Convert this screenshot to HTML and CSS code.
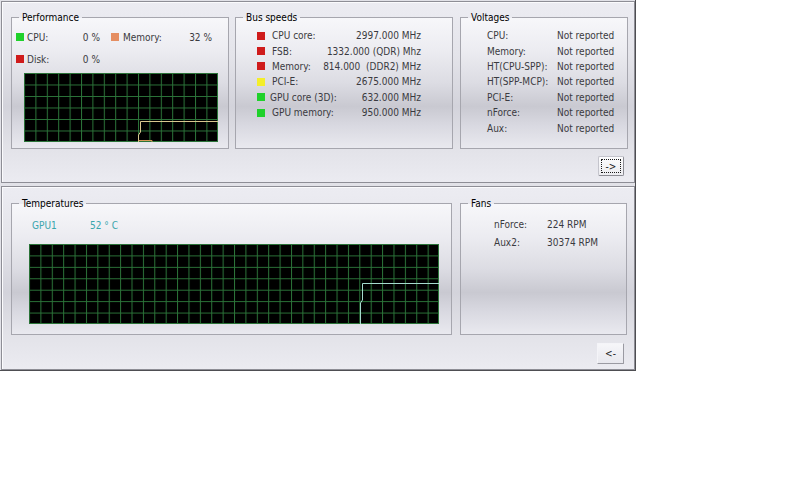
FILE: index.html
```html
<!DOCTYPE html>
<html>
<head>
<meta charset="utf-8">
<title>System Monitor</title>
<link rel="stylesheet" href="styles.css">
</head>
<body>
<div class="window">
  <section class="panel panel-top">
    <div class="groups groups-top">
      <fieldset class="group perf">
        <legend>Performance</legend>
        <div class="perf-row r1">
          <span class="item item-a"><i class="sq green"></i><span class="lbl">CPU:</span><span class="val">0 %</span></span>
          <span class="item item-b"><i class="sq orange"></i><span class="lbl">Memory:</span><span class="val">32 %</span></span>
        </div>
        <div class="perf-row r2">
          <span class="item item-a"><i class="sq red"></i><span class="lbl">Disk:</span><span class="val">0 %</span></span>
        </div>
        <svg class="graph graph-perf" width="194" height="69" viewBox="0 0 194 69">
          <defs>
            <pattern id="gridA" width="11.4" height="11.5" patternUnits="userSpaceOnUse">
              <path d="M0.5 0V11.5M0 0.5H11.4" stroke="#2b7439" stroke-width="1" fill="none"/>
            </pattern>
          </defs>
          <rect width="194" height="69" fill="#000"/>
          <rect width="194" height="69" fill="url(#gridA)"/>
          <path d="M193.5 0V69M0 68.5H194" stroke="#2b7439" fill="none"/>
          <path d="M194 48.5H116.5V59L114.5 62V69" stroke="#d8c68e" fill="none"/>
          <path d="M114.5 67.5H128V69" stroke="#d49a56" fill="none"/>
        </svg>
      </fieldset>
      <fieldset class="group bus">
        <legend>Bus speeds</legend>
        <div class="rows">
          <div class="bus-row"><i class="sq red"></i><span class="lbl">CPU core:</span><span class="val">2997.000 MHz</span></div>
          <div class="bus-row"><i class="sq red"></i><span class="lbl">FSB:</span><span class="val">1332.000 (QDR) Mhz</span></div>
          <div class="bus-row"><i class="sq red"></i><span class="lbl">Memory:</span><span class="val">814.000&nbsp; (DDR2) MHz</span></div>
          <div class="bus-row"><i class="sq yellow"></i><span class="lbl">PCI-E:</span><span class="val">2675.000 MHz</span></div>
          <div class="bus-row"><i class="sq green"></i><span class="lbl lbl-tight">GPU core (3D):</span><span class="val">632.000 MHz</span></div>
          <div class="bus-row"><i class="sq green"></i><span class="lbl">GPU memory:</span><span class="val">950.000 MHz</span></div>
        </div>
      </fieldset>
      <fieldset class="group volt">
        <legend>Voltages</legend>
        <div class="rows">
          <div class="volt-row"><span class="lbl">CPU:</span><span class="val">Not reported</span></div>
          <div class="volt-row"><span class="lbl">Memory:</span><span class="val">Not reported</span></div>
          <div class="volt-row"><span class="lbl">HT(CPU-SPP):</span><span class="val">Not reported</span></div>
          <div class="volt-row"><span class="lbl">HT(SPP-MCP):</span><span class="val">Not reported</span></div>
          <div class="volt-row"><span class="lbl">PCI-E:</span><span class="val">Not reported</span></div>
          <div class="volt-row"><span class="lbl">nForce:</span><span class="val">Not reported</span></div>
          <div class="volt-row"><span class="lbl">Aux:</span><span class="val">Not reported</span></div>
        </div>
      </fieldset>
    </div>
    <div class="btn-row btn-row-top"><button class="btn btn-focus">-&gt;</button></div>
  </section>
  <section class="panel panel-bottom">
    <div class="groups groups-bottom">
      <fieldset class="group temp">
        <legend>Temperatures</legend>
        <div class="temp-row"><span class="t-lbl">GPU1</span><span class="t-val">52 ° C</span></div>
        <svg class="graph graph-temp" width="410" height="80" viewBox="0 0 410 80">
          <defs>
            <pattern id="gridB" width="11.39" height="11.43" patternUnits="userSpaceOnUse">
              <path d="M0.5 0V11.43M0 0.5H11.39" stroke="#2b7439" stroke-width="1" fill="none"/>
            </pattern>
          </defs>
          <rect width="410" height="80" fill="#000"/>
          <rect width="410" height="80" fill="url(#gridB)"/>
          <path d="M409.5 0V80M0 79.5H410" stroke="#2b7439" fill="none"/>
          <path d="M331.5 80V59L333.5 56V39.5H410" stroke="#a4dacd" fill="none"/>
        </svg>
      </fieldset>
      <fieldset class="group fans">
        <legend>Fans</legend>
        <div class="rows fan-rows">
          <div class="fan-row"><span class="lbl">nForce:</span><span class="val">224 RPM</span></div>
          <div class="fan-row"><span class="lbl">Aux2:</span><span class="val">30374 RPM</span></div>
        </div>
      </fieldset>
    </div>
    <div class="btn-row btn-row-bottom"><button class="btn btn-plain">&lt;-</button></div>
  </section>
</div>
</body>
</html>
```
FILE: styles.css
```css
html, body {
  margin: 0;
  padding: 0;
  background: #ffffff;
}

body {
  font-family: "DejaVu Sans Condensed", "Liberation Sans", sans-serif;
  font-size: 10px;
  color: #3a3a40;
}

.window {
  width: 636px;
  height: 371px;
  box-sizing: border-box;
  padding: 1px 0 0 1px;
  border-right: 1px solid #4e4e52;
  border-bottom: 1px solid #4e4e52;
  background: #e2e2e8;
  display: flex;
  flex-direction: column;
  gap: 3px;
}

.panel {
  width: 634px;
  box-sizing: border-box;
  border: 1px solid #8e8e96;
  box-shadow: inset 1px 1px 0 #fbfbfd;
  background: linear-gradient(to bottom, #ececf2 0%, #e4e4ea 30%, #d3d3db 58%, #e2e2e8 80%, #ebebf1 100%);
  display: flex;
  flex-direction: column;
}

.panel-top {
  height: 182px;
}

.panel-bottom {
  height: 184px;
}

.groups {
  display: flex;
  padding-left: 9px;
}

.groups-top {
  padding-top: 9px;
  gap: 6px;
}

.groups-top .bus + .volt {
  margin-left: 1px;
}

.groups-bottom {
  padding-top: 10px;
  gap: 8px;
}

.group {
  margin: 0;
  padding: 0;
  min-inline-size: 0;
  box-sizing: border-box;
  height: 138px;
  border: 1px solid #a6a6ae;
  background: linear-gradient(to bottom, #f7f7fa 0%, #ececf1 25%, #dcdce3 50%, #c9c9d1 68%, #d8d8e0 82%, #e9e9ef 100%);
}

.group legend {
  margin-left: 7px;
  padding: 0 3px;
  line-height: 13px;
  color: #000;
}

.perf { width: 218px; }
.bus { width: 218px; }
.volt { width: 168px; }
.temp { width: 441px; }
.fans { width: 167px; }

.sq {
  display: inline-block;
  width: 8px;
  height: 8px;
  flex: none;
}
.green { background: #1fd12b; }
.orange { background: #e58e62; }
.red { background: #cf1b1b; }
.yellow { background: #f4ee2a; }

/* Performance */
.perf-row {
  display: flex;
  align-items: center;
  height: 14px;
  padding-left: 4px;
}
.perf-row.r1 { margin-top: 6px; }
.perf-row.r2 { margin-top: 8px; }

.item {
  display: flex;
  align-items: center;
}
.item .sq { margin-right: 3px; }
.item .lbl { flex: 1; }
.item .val { text-align: right; }
.item-a { width: 84px; }
.item-b { width: 101px; margin-left: 11px; }
.item-b .sq { margin-right: 4px; }

.graph {
  display: block;
}
.graph-perf {
  margin: 7px 0 0 12px;
}

/* Bus speeds */
.rows {
  padding-top: 4px;
}
.bus-row {
  display: flex;
  align-items: center;
  height: 15.4px;
  padding-left: 21px;
  padding-right: 31px;
}
.bus-row .sq { margin-right: 7px; }
.bus-row .lbl-tight { margin-left: -2px; }
.bus-row .val {
  margin-left: auto;
  white-space: pre;
}

/* Voltages */
.volt-row {
  display: flex;
  align-items: center;
  height: 15.4px;
  padding-left: 26px;
}
.volt-row .lbl { width: 70px; }

/* Buttons */
.btn-row {
  display: flex;
  justify-content: flex-end;
  padding-right: 10px;
}
.btn-row-top { margin-top: 7px; }
.btn-row-bottom { margin-top: 8px; }

.btn {
  box-sizing: border-box;
  padding: 0;
  margin: 0;
  font-family: inherit;
  font-size: 10px;
  color: #222;
  display: flex;
  align-items: center;
  justify-content: center;
}
.btn-focus {
  width: 26px;
  height: 20px;
  border: 1px solid;
  border-color: #c4c4cc #8a8a92 #8a8a92 #c4c4cc;
  border-radius: 2px;
  background: linear-gradient(to bottom, #fdfdfe, #ececf0);
  outline: 1px dotted #1a1a1a;
  outline-offset: -4px;
}
.btn-plain {
  width: 27px;
  height: 21px;
  border: 1px solid;
  border-color: #f4f4f8 #9a9aa2 #9a9aa2 #f4f4f8;
  border-radius: 1px;
  background: linear-gradient(to bottom, #f6f6f9, #e8e8ee);
}

/* Temperatures */
.temp-row {
  display: flex;
  align-items: center;
  height: 14px;
  margin-top: 8px;
  padding-left: 20px;
  color: #3aa6ad;
}
.t-lbl { width: 58px; }
.graph-temp {
  margin: 12px 0 0 17px;
}

/* Fans */
.fan-rows {
  padding-top: 7px;
  display: flex;
  flex-direction: column;
  gap: 4px;
}
.fan-row {
  display: flex;
  align-items: center;
  height: 14px;
  padding-left: 33px;
}
.fan-row .lbl { width: 53px; }
```
